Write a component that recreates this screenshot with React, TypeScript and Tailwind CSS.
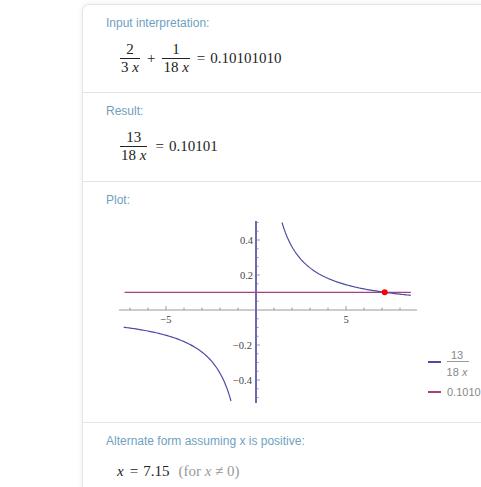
import React from "react";

// plot geometry (svg coords; svg sits at page x=110, y=214)
const OX = 145;
const OY = 96;
const SX = 18;
const SY = 175;
const px = (x: number) => OX + x * SX;
const py = (y: number) => OY - y * SY;

function branch(from: number, to: number) {
  const pts: string[] = [];
  const n = 80;
  for (let i = 0; i <= n; i++) {
    const x = from + ((to - from) * i) / n;
    const y = 13 / (18 * x);
    pts.push(`${px(x).toFixed(2)},${py(y).toFixed(2)}`);
  }
  return "M" + pts.join(" L");
}

const POS = branch(13 / (18 * 0.5), 8.6);
const NEG = branch(-7.35, -13 / (18 * 0.52));
const XTICKS = [-7, -6, -5, -4, -3, -2, -1, 1, 2, 3, 4, 5, 6, 7, 8];
const YTICKS = Array.from({ length: 21 }, (_, i) => -0.5 + i * 0.05).filter(
  (v) => Math.abs(v) > 0.01
);

const serif = "font-['Liberation_Serif','Times_New_Roman',serif]";

function Frac({ num, den }: { num: React.ReactNode; den: React.ReactNode }) {
  return (
    <span className="inline-flex flex-col items-center align-middle">
      <span className="px-px leading-[17px]">{num}</span>
      <span className="h-px w-full bg-[#222]" />
      <span className="px-px leading-[17px]">{den}</span>
    </span>
  );
}

function Pod({
  title,
  className,
  children,
}: {
  title: string;
  className?: string;
  children: React.ReactNode;
}) {
  return (
    <div className={`border-b border-[#e3e3e3] pl-[23px] pt-[11px] ${className ?? ""}`}>
      <div className="text-[12px] leading-[14px] text-[#6f9fc3]">{title}</div>
      {children}
    </div>
  );
}

function Plot() {
  return (
    <svg width="380" height="196" className="ml-[5px] mt-[7px] block overflow-visible">
      {/* x axis */}
      <line x1="8" y1={OY} x2="306" y2={OY} stroke="#9a9a9a" strokeWidth="1" />
      {XTICKS.map((t) => (
        <line
          key={t}
          x1={px(t)}
          x2={px(t)}
          y1={OY}
          y2={OY - (t === 5 || t === -5 ? 4 : 2.5)}
          stroke="#9a9a9a"
          strokeWidth="1"
        />
      ))}
      {/* y axis ticks */}
      {YTICKS.map((t) => {
        const major = Math.abs(Math.round(t * 100) % 20) === 0;
        return (
          <line
            key={t.toFixed(2)}
            x1={OX}
            x2={OX + (major ? 4 : 2.5)}
            y1={py(t)}
            y2={py(t)}
            stroke="#9a9a9a"
            strokeWidth="1"
          />
        );
      })}
      <g fontFamily="'Liberation Serif', 'Times New Roman', serif" fontSize="10.5" fill="#444">
        <text x={OX - 3} y={py(0.4) + 3.5} textAnchor="end">0.4</text>
        <text x={OX - 3} y={py(0.2) + 3.5} textAnchor="end">0.2</text>
        <text x={OX - 4} y={py(-0.2) + 3.5} textAnchor="end">−0.2</text>
        <text x={OX - 4} y={py(-0.4) + 3.5} textAnchor="end">−0.4</text>
        <text x={px(-5)} y={OY + 13} textAnchor="middle">−5</text>
        <text x={px(5)} y={OY + 13} textAnchor="middle">5</text>
      </g>
      {/* asymptote drawn by curve */}
      <line x1={OX} x2={OX} y1="7" y2="189" stroke="#6a6bb0" strokeWidth="2" />
      {/* constant line */}
      <line x1={px(-7.3)} x2={px(8.6)} y1={py(0.10101)} y2={py(0.10101)} stroke="#a4427f" strokeWidth="1.2" />
      <path d={POS} fill="none" stroke="#4c4ca6" strokeWidth="1.2" />
      <path d={NEG} fill="none" stroke="#4c4ca6" strokeWidth="1.2" />
      <circle cx={px(7.15)} cy={py(0.10101)} r="3" fill="#f00" />
      {/* legend */}
      <line x1="317" x2="330" y1="148" y2="148" stroke="#4c4ca6" strokeWidth="2" />
      <g fontFamily="'Liberation Sans', Arial, sans-serif" fontSize="11" fill="#888">
        <text x="346" y="145" textAnchor="middle">13</text>
        <line x1="336" x2="358" y1="147.5" y2="147.5" stroke="#999" strokeWidth="1" />
        <text x="346" y="162" textAnchor="middle">
          18 <tspan fontStyle="italic">x</tspan>
        </text>
        <text x="336" y="182">0.10101</text>
      </g>
      <line x1="317" x2="330" y1="178" y2="178" stroke="#a4427f" strokeWidth="2" />
    </svg>
  );
}

export default function App() {
  return (
    <div className="h-[487px] w-[481px] overflow-hidden bg-white pl-[82px] pt-[4px] font-['Liberation_Sans',Arial,sans-serif]">
      <div className="w-[440px] rounded-tl-[7px] border-l border-t border-[#e6e6e6] bg-white shadow-[0_0_6px_rgba(0,0,0,0.08)]">
        <Pod title="Input interpretation:" className="h-[88px]">
          <div className={`ml-[14px] mt-[11px] flex items-center text-[15px] text-[#222] ${serif}`}>
            <Frac num="2" den={<>3 <i>x</i></>} />
            <span className="mx-[7px]">+</span>
            <Frac num="1" den={<>18 <i>x</i></>} />
            <span className="ml-[7px]">=</span>
            <span className="ml-[5px]">0.10101010</span>
          </div>
        </Pod>
        <Pod title="Result:" className="h-[89px]">
          <div className={`ml-[14px] mt-[11px] flex items-center text-[15px] text-[#222] ${serif}`}>
            <Frac num="13" den={<>18 <i>x</i></>} />
            <span className="ml-[8px]">=</span>
            <span className="ml-[5px]">0.10101</span>
          </div>
        </Pod>
        <Pod title="Plot:" className="h-[241px]">
          <Plot />
        </Pod>
        <div className="h-[70px] pl-[23px] pt-[11px]">
          <div className="text-[12px] leading-[14px] text-[#6f9fc3]">Alternate form assuming x is positive:</div>
          <div className={`ml-[11px] mt-[12px] flex items-baseline text-[15px] text-[#222] ${serif}`}>
            <i>x</i>
            <span className="ml-[6px]">=</span>
            <span className="ml-[5px]">7.15</span>
            <span className="ml-[9px] text-[#999]">
              (for <i>x</i> ≠ 0)
            </span>
          </div>
        </div>
      </div>
    </div>
  );
}
